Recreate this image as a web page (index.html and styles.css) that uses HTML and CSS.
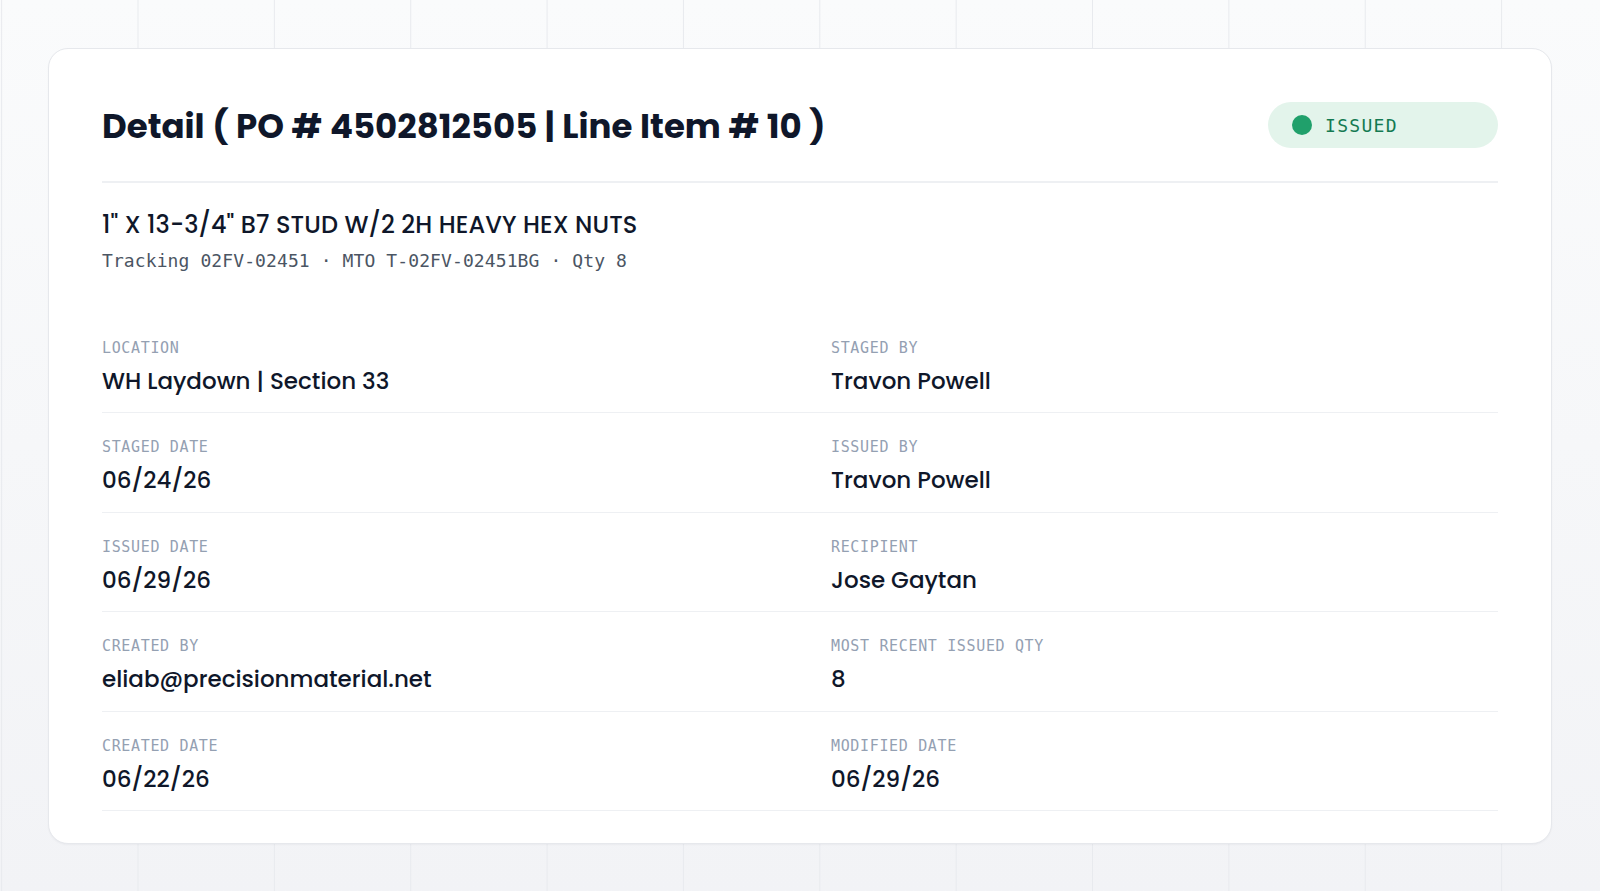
FILE: index.html
```html
<!DOCTYPE html>
<html lang="en">
<head>
<meta charset="utf-8">
<title>Detail</title>
<link rel="stylesheet" href="styles.css">
</head>
<body>
<main class="card">
  <header class="card-head">
    <h1 class="title">Detail ( PO # 4502812505 | Line Item # 10 )</h1>
    <div class="badge"><span class="dot"></span><span class="badge-text">ISSUED</span></div>
  </header>
  <section class="item">
    <h2 class="item-name">1" X 13-3/4" B7 STUD W/2 2H HEAVY HEX NUTS</h2>
    <p class="item-meta">Tracking 02FV-02451 · MTO T-02FV-02451BG · Qty 8</p>
  </section>
  <section class="fields">
    <div class="row">
      <div class="field"><div class="label">LOCATION</div><div class="value">WH Laydown | Section 33</div></div>
      <div class="field"><div class="label">STAGED BY</div><div class="value">Travon Powell</div></div>
    </div>
    <div class="row">
      <div class="field"><div class="label">STAGED DATE</div><div class="value">06/24/26</div></div>
      <div class="field"><div class="label">ISSUED BY</div><div class="value">Travon Powell</div></div>
    </div>
    <div class="row">
      <div class="field"><div class="label">ISSUED DATE</div><div class="value">06/29/26</div></div>
      <div class="field"><div class="label">RECIPIENT</div><div class="value">Jose Gaytan</div></div>
    </div>
    <div class="row">
      <div class="field"><div class="label">CREATED BY</div><div class="value">eliab@precisionmaterial.net</div></div>
      <div class="field"><div class="label">MOST RECENT ISSUED QTY</div><div class="value">8</div></div>
    </div>
    <div class="row">
      <div class="field"><div class="label">CREATED DATE</div><div class="value">06/22/26</div></div>
      <div class="field"><div class="label">MODIFIED DATE</div><div class="value">06/29/26</div></div>
    </div>
  </section>
</main>
</body>
</html>
```

FILE: styles.css
```css
* { box-sizing: border-box; }
html, body { margin: 0; padding: 0; }
body {
  min-height: 891px;
  padding: 48px;
  font-family: "Poppins", "Open Sans", "DejaVu Sans", sans-serif;
  color: #0f172a;
  background-color: #f5f6f8;
  background-image:
    linear-gradient(to right, #e8eaee 1px, transparent 1px),
    linear-gradient(to bottom, #fafbfc, #f2f3f6);
  background-size: 136.36px 100%, 100% 100%;
  background-position: 137.5px 0, 0 0;
}
.card {
  background: #ffffff;
  border: 1px solid #e6e8ec;
  border-radius: 20px;
  padding: 53px 53px 32px;
  box-shadow: 0 1px 2px rgba(15, 23, 42, 0.04);
}
.card-head {
  display: flex;
  align-items: center;
  justify-content: space-between;
  padding-bottom: 33px;
  border-bottom: 2px solid #eef0f3;
}
.title {
  margin: 0;
  padding-top: 3px;
  font-size: 34px;
  line-height: 43px;
  font-weight: 700;
  word-spacing: 0.4px;
}
.badge {
  width: 230px;
  height: 46px;
  border-radius: 23px;
  background: #e3f4eb;
  display: flex;
  align-items: center;
  padding-left: 24px;
  gap: 13px;
}
.dot {
  width: 20px;
  height: 20px;
  border-radius: 50%;
  background: #20a06b;
}
.badge-text {
  font-family: "DejaVu Sans Mono", monospace;
  font-size: 18px;
  letter-spacing: 1.3px;
  color: #147a52;
}
.item { padding-top: 26px; }
.item-name {
  margin: 0;
  font-size: 24px;
  line-height: 32px;
  font-weight: 500;
  letter-spacing: 0.12px;
}
.item-meta {
  margin: 8px 0 0;
  font-family: "DejaVu Sans Mono", monospace;
  font-size: 18px;
  line-height: 24px;
  letter-spacing: 0.1px;
  color: #4b5563;
}
.fields { margin-top: 40.5px; }
.row {
  display: grid;
  grid-template-columns: 1fr 1fr;
  column-gap: 62px;
  padding: 24px 0 16.5px;
  border-bottom: 1px solid #eef0f3;
}
.label {
  font-family: "DejaVu Sans Mono", monospace;
  font-size: 15px;
  line-height: 20px;
  letter-spacing: 0.65px;
  color: #94a0b2;
}
.value {
  margin-top: 8px;
  font-size: 23px;
  line-height: 30px;
  font-weight: 500;
}
```
